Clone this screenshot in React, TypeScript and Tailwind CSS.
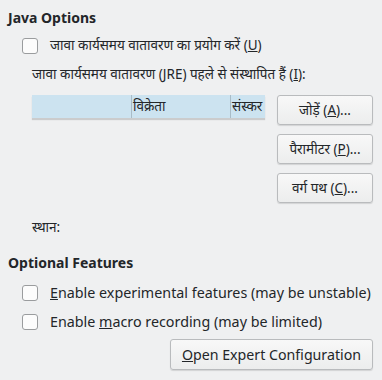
import React from 'react'

function Check({ children, className = '' }: { children: React.ReactNode; className?: string }) {
  return (
    <label className={`flex items-center h-[29px] pl-[22px] ${className}`}>
      <span className="w-4 h-4 rounded-[3px] border border-[#9a9c9e] bg-[#fcfcfc] shrink-0" />
      <span className="ml-[12px] whitespace-nowrap">{children}</span>
    </label>
  )
}

function Btn({ children, className = '' }: { children: React.ReactNode; className?: string }) {
  return (
    <button
      type="button"
      className={`h-[30px] rounded-[3px] border border-[#b9bbbd] bg-gradient-to-b from-[#f8f8f8] to-[#eceded] shadow-[0_1px_1px_rgba(0,0,0,0.12)] text-[#232629] whitespace-nowrap ${className}`}
    >
      {children}
    </button>
  )
}

export default function App() {
  return (
    <div
      className="w-[382px] h-[380px] bg-[#eff0f1] text-[#232629] text-[14px] leading-[19px] overflow-hidden"
      style={{ fontFamily: '"Noto Sans", "Noto Sans Devanagari", sans-serif' }}
    >
      <div className="pt-[8px] pl-[8px] font-bold text-[14px]">Java Options</div>
      <div className="mt-[4px]">
        <Check className="text-[13.5px]">
          जावा कार्यसमय वातावरण का प्रयोग करें (<u>U</u>)
        </Check>
      </div>
      <div className="pl-[32px] mt-[1px] h-[26px] flex items-center text-[13.5px]">
        जावा कार्यसमय वातावरण (JRE) पहले से संस्थापित हैं (<u>I</u>):
      </div>
      <div className="flex pl-[32px] pr-[9px] mt-[8px] text-[13.5px]">
        <div className="w-[233px] shrink-0">
          <div className="flex h-[23px] bg-[#cce3f0] shadow-[0_2px_1px_rgba(0,0,0,0.15)]">
            <div className="w-[100px] shrink-0 border-r border-[#a9bcc7]" />
            <div className="w-[99px] shrink-0 border-r border-[#a9bcc7] flex items-center pl-[1px]">विक्रेता</div>
            <div className="w-[34px] shrink-0 flex items-center pl-[1px] whitespace-nowrap">संस्कर</div>
          </div>
        </div>
        <div className="ml-auto flex flex-col gap-[9px] w-[96px]">
          <Btn>
            जोड़ें (<u>A</u>)...
          </Btn>
          <Btn>
            पैरामीटर (<u>P</u>)...
          </Btn>
          <Btn>
            वर्ग पथ (<u>C</u>)...
          </Btn>
        </div>
      </div>
      <div className="pl-[32px] mt-[14px] h-[20px] flex items-center text-[13.5px]">स्थान:</div>
      <div className="pl-[8px] mt-[16px] font-bold text-[14px]">Optional Features</div>
      <div className="mt-[6px] text-[14.3px]">
        <Check>
          <u>E</u>nable experimental features (may be unstable)
        </Check>
        <Check>
          Enable <u>m</u>acro recording (may be limited)
        </Check>
      </div>
      <div className="flex justify-end pr-[9px] mt-[3px]">
        <Btn className="w-[203px] h-[31px] text-[14.2px]">
          <u>O</u>pen Expert Configuration
        </Btn>
      </div>
    </div>
  )
}
